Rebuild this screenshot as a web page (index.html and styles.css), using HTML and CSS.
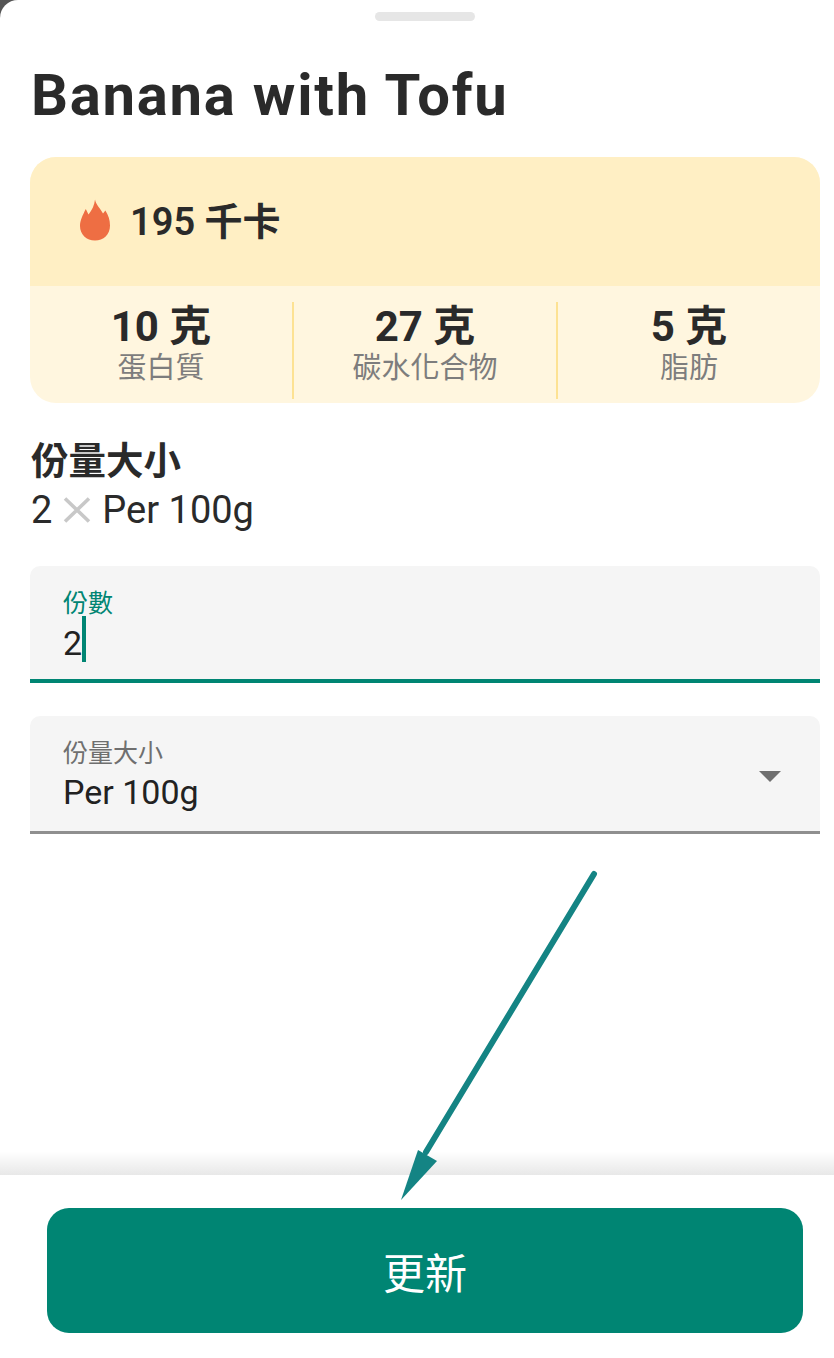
FILE: index.html
```html
<!DOCTYPE html>
<html lang="zh-Hant">
<head>
<meta charset="utf-8">
<title>Banana with Tofu</title>
<link rel="stylesheet" href="styles.css">
</head>
<body>
<main class="sheet">
  <div class="content">
    <div class="handle"></div>
    <h1 class="title">Banana with Tofu</h1>
    <section class="card">
      <div class="card-top">
        <svg class="flame" viewBox="0 0 30 42" width="30" height="42" aria-hidden="true"><path fill="#EE6E43" d="M15 0.5C16 6 20.5 9.5 23 14.5L25.4 11.5C28.5 16.5 30 21 30 26.5C30 35.5 23.5 41.5 15 41.5C6.5 41.5 0 35.5 0 27C0 21.5 2.5 16.5 5.8 10L8.5 15.5C12 11 14.5 6 15 0.5Z"/></svg>
        <span class="kcal">195 千卡</span>
      </div>
      <div class="macros">
        <div class="macro"><div class="macro-value">10 克</div><div class="macro-label">蛋白質</div></div>
        <div class="macro"><div class="macro-value">27 克</div><div class="macro-label">碳水化合物</div></div>
        <div class="macro"><div class="macro-value">5 克</div><div class="macro-label">脂肪</div></div>
      </div>
    </section>
    <h2 class="serving-title">份量大小</h2>
    <p class="serving-text">2 <svg class="times" viewBox="0 0 28 26" width="28" height="26" aria-hidden="true"><path d="M2 1.5L26 24.5M26 1.5L2 24.5" stroke="#C8C8C8" stroke-width="3.6" fill="none"/></svg> Per 100g</p>
    <div class="field field-active">
      <div class="field-label">份數</div>
      <div class="field-value">2<span class="caret"></span></div>
    </div>
    <div class="field field-select">
      <div>
        <div class="field-label">份量大小</div>
        <div class="field-value">Per 100g</div>
      </div>
      <span class="arrow-down"></span>
    </div>
  </div>
  <footer class="footer">
    <button class="update" type="button">更新</button>
  </footer>
  <svg class="annotation" viewBox="0 0 834 1358" width="834" height="1358" aria-hidden="true">
    <path d="M594 874L426 1152" stroke="#148484" stroke-width="6" stroke-linecap="round" fill="none"/>
    <path d="M401 1200L418 1150L437 1161Z" fill="#148484"/>
  </svg>
</main>
</body>
</html>
```
FILE: styles.css
```css
* { box-sizing: border-box; }
html, body { margin: 0; padding: 0; }
body {
  width: 834px;
  height: 1358px;
  background: #555;
  overflow: hidden;
  font-family: Roboto, "Noto Sans CJK TC", sans-serif;
  color: #2a2a2a;
}
.sheet {
  position: relative;
  width: 834px;
  height: 1358px;
  background: #fff;
  border-top-left-radius: 18px;
  display: flex;
  flex-direction: column;
  overflow: hidden;
}
.content { flex: 1; padding: 12px 14px 0 30px; }
.handle { width: 100px; height: 9px; border-radius: 5px; background: #e6e6e6; margin: 0 0 0 345px; }
.title {
  margin: 37px 0 0 1px;
  font-size: 58px;
  line-height: 74px;
  font-weight: 700;
  letter-spacing: 1.75px;
}
.card { margin-top: 25px; height: 246px; border-radius: 26px; overflow: hidden; background: #fff6df; }
.card-top { height: 129px; background: #ffefc4; display: flex; align-items: center; padding: 0 0 0 50px; gap: 20px; }
.flame { display: block; margin-top: -4px; }
.kcal { font-size: 38px; font-weight: 600; line-height: 44px; margin-top: 0; }
.macros { display: flex; height: 117px; padding: 16px 0 4px; }
.macro { flex: 1; text-align: center; border-left: 2px solid #fde293; }
.macro:first-child { border-left: 0; }
.macro-value { font-size: 42px; line-height: 46px; font-weight: 700; padding-top: 2px; }
.macro-label { font-size: 29px; line-height: 36px; color: #7d7d7d; }
.serving-title { margin: 35px 0 0 1px; font-size: 37.5px; line-height: 46px; font-weight: 600; }
.serving-text { margin: 1px 0 0 1px; font-size: 38px; line-height: 50px; display: flex; align-items: center; gap: 11px; }
.times { display: block; }
.field { background: #f5f5f5; border-radius: 10px 10px 0 0; padding: 0 33px; }
.field-active { margin-top: 31px; height: 117px; border-bottom: 4px solid #008573; padding-top: 21px; }
.field-select { margin-top: 33px; height: 118px; border-bottom: 3px solid #8f8f8f; padding-top: 21px; padding-right: 39px; display: flex; justify-content: space-between; align-items: center; }
.field-select > div { align-self: flex-start; }
.field-select .field-value { margin-top: -1px; }
.field-label { font-size: 25px; line-height: 34px; color: #6f6f6f; }
.field-active .field-label { color: #008573; }
.field-value { font-size: 34px; line-height: 44px; color: #222; display: flex; align-items: center; }
.caret { width: 4px; height: 46px; background: #008573; margin: -8px 0 0 0; }
.arrow-down { width: 0; height: 0; border-left: 11px solid transparent; border-right: 11px solid transparent; border-top: 11px solid #6f6f6f; margin-top: -16px; }
.footer { height: 183px; flex: none; padding: 33px 31px 0 47px; position: relative; background: #fff; }
.footer::before { content: ""; position: absolute; left: 0; right: 0; top: -24px; height: 24px; background: linear-gradient(to bottom, rgba(0,0,0,0), rgba(0,0,0,.09)); }
.update {
  display: block;
  width: 756px;
  height: 125px;
  border: 0;
  border-radius: 22px;
  background: #008573;
  color: #fff;
  font-family: "Noto Sans CJK TC", sans-serif;
  font-size: 42px;
  font-weight: 400;
}
.annotation { position: absolute; left: 0; top: 0; pointer-events: none; }
```
